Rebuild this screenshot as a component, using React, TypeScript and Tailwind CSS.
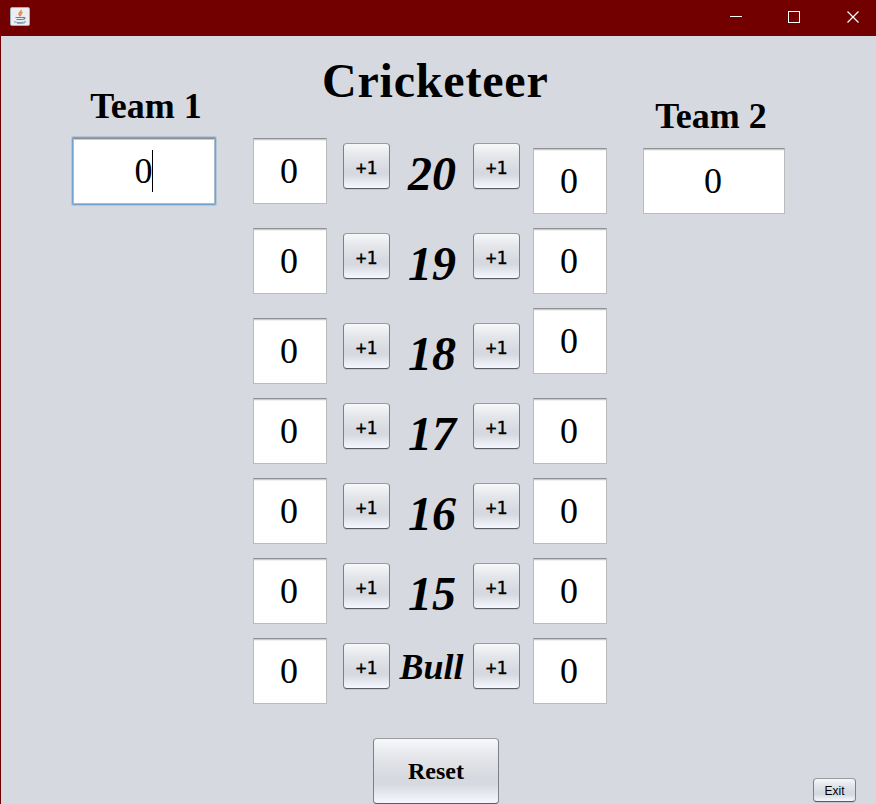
import React from "react";

const serif = "font-['Liberation_Serif','Times_New_Roman',serif]";

function ScoreField({ className = "" }: { className?: string }) {
  return (
    <div
      className={`${serif} flex h-[66px] shrink-0 items-center justify-center border border-t-[#8f9093] border-x-[#bbbbbe] border-b-[#bbbbbe] bg-white pr-[2px] text-[36px] leading-none text-black shadow-[inset_0_1px_0_#c9cacc,inset_0_2px_0_#f0f0f1] ${className}`}
    >
      0
    </div>
  );
}

const buttonSkin =
  "flex shrink-0 items-center justify-center rounded-[4px] border border-t-[#9a9ca1] border-x-[#7d8087] border-b-[#585c64] bg-[linear-gradient(to_bottom,#f7f8fa_0%,#e4e6ea_28%,#d6d9df_60%,#d6d9df_70%,#f5f8ff_100%)] text-black shadow-[0_1px_0_#c3c6cc]";

function PlusButton({ className = "" }: { className?: string }) {
  return (
    <button
      className={`${buttonSkin} mt-[5px] h-[46px] w-[47px] pt-[3px] font-['DejaVu_Sans_Mono',monospace] text-[18px] leading-none [-webkit-text-stroke:0.3px_#000] ${className}`}
    >
      +1
    </button>
  );
}

const rows = [
  { label: "20", height: "h-[90px]", right: "mt-[10px]" },
  { label: "19", height: "h-[90px]", right: "" },
  { label: "18", height: "h-[80px]", right: "-mt-[10px]" },
  { label: "17", height: "h-[80px]", right: "" },
  { label: "16", height: "h-[80px]", right: "" },
  { label: "15", height: "h-[80px]", right: "" },
  { label: "Bull", height: "h-[66px]", right: "" },
];

function TitleBar() {
  return (
    <header className="flex h-9 items-start justify-between bg-[#730000]">
      <svg className="ml-[10px] mt-[7px]" width="20" height="19" viewBox="0 0 20 19" fill="none">
        <rect x="0.5" y="0.5" width="19" height="18" rx="1.5" fill="#eceff1" stroke="#9fb0bc" />
        <path d="M11.300 3c.500 1.700-3.600 2.700-2 4.800l1 1.400M12.600 5.300c-2 .8-2.300 1.700-1.500 3.200" stroke="#e58a4c" strokeWidth="1.500" />
        <path d="M5.500 10.500h8M6.500 12.500h6M13.500 10.500c2.200-.3 1.800 1.700-.8 2" stroke="#5f819e" strokeWidth="1.200" />
        <path d="M4 14.700c2.500 1.100 9.500 1.100 12-.2M7 16.300c3 .3 6 .1 8-.6" stroke="#7d9ab2" />
      </svg>
      <svg className="mr-[17px] mt-[11px]" width="129" height="12" viewBox="0 0 129 12" fill="none" stroke="#fff">
        <path d="M0 5.500h12" />
        <rect x="58.500" y="0.500" width="11" height="11" />
        <path d="M117.500.500l11 11M128.500.500l-11 11" strokeWidth="1.200" />
      </svg>
    </header>
  );
}

export default function App() {
  return (
    <div className="flex h-[804px] w-[876px] flex-col overflow-hidden bg-[#730000]">
      <TitleBar />
      <main className="ml-px flex h-[768px] items-start bg-[#d6d9e0] text-black">
        <section className="flex w-[252px] flex-col pl-[70px] pt-[50px]">
          <h2 className={`${serif} h-[51px] w-[150px] text-center text-[36px] font-bold leading-[40px]`}>Team 1</h2>
          <div className="ml-px flex h-[68px] w-[144px] items-center justify-center rounded-[1px] border border-[#73a4d1] bg-white pb-px pr-px shadow-[0_0_0_1px_#b4c6da,inset_0_1px_0_#8f9093,inset_0_2px_0_#c9cacc,inset_0_0_0_1px_#a9bccd]">
            <span className={`${serif} text-[36px] leading-none`}>0</span>
            <span className="-ml-px h-[42px] w-px bg-black" />
          </div>
        </section>

        <section className="flex w-[354px] flex-col">
          <h1 className="h-[102px] whitespace-nowrap pl-[69px] pt-[20px] font-['Old_English_Text_MT','Liberation_Serif',serif] text-[48px] font-bold leading-[50px] tracking-[0.8px]">
            Cricketeer
          </h1>
          {rows.map((row) => (
            <div key={row.label} className={`flex items-start ${row.height}`}>
              <ScoreField className="w-[74px]" />
              <PlusButton className="ml-4" />
              <div
                className={`${serif} w-[83px] whitespace-nowrap text-center font-bold italic ${
                  row.label === "Bull" ? "pt-[9px] text-[36px] leading-[40px]" : "pl-px pt-[9px] text-[48px] leading-[54px]"
                }`}
              >
                {row.label}
              </div>
              <PlusButton />
              <ScoreField className={`ml-[13px] w-[74px] ${row.right}`} />
            </div>
          ))}
          <button className={`${buttonSkin} ${serif} ml-[120px] mt-[34px] h-[66px] w-[126px] text-[24px] font-bold leading-none`}>
            Reset
          </button>
        </section>

        <section className="flex h-full w-[269px] flex-col pl-[36px] pt-[60px]">
          <h2 className={`${serif} h-[52px] w-[136px] text-center text-[36px] font-bold leading-[40px]`}>Team 2</h2>
          <ScoreField className="w-[142px]" />
          <button className={`${buttonSkin} mb-[2px] mr-5 mt-auto h-6 w-[43px] self-end pt-px font-['Liberation_Sans',Arial,sans-serif] text-[12px] leading-none`}>
            Exit
          </button>
        </section>
      </main>
    </div>
  );
}
